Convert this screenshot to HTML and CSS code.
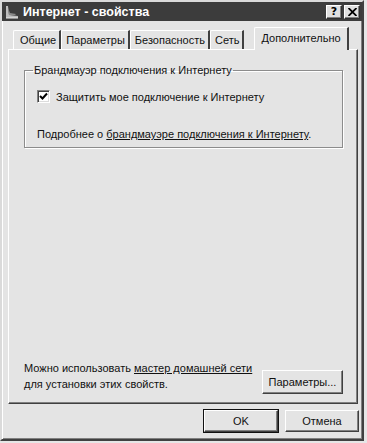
FILE: index.html
```html
<!DOCTYPE html>
<html lang="ru">
<head>
<meta charset="utf-8">
<title>Интернет - свойства</title>
<link rel="stylesheet" href="styles.css">
</head>
<body>
<div class="window">
  <div class="titlebar">
    <svg class="app-icon" width="16" height="16" viewBox="0 0 16 16">
      <path d="M2 2 L4 2 L5 11 L14 12 L14 14 L2 14 Z" fill="#bdbdbd"/>
      <path d="M4 4 L6 9 L12 10 L11 11 L5 11 Z" fill="#8a8a8a"/>
      <path d="M2 14 L14 14" stroke="#e8e8e8" stroke-width="1"/>
    </svg>
    <span class="title">Интернет - свойства</span>
    <div class="title-buttons">
      <span class="tbtn">?</span>
      <span class="tbtn close">
        <svg width="9" height="8" viewBox="0 0 9 8"><path d="M0.5 0 L8.5 8 M8.5 0 L0.5 8" stroke="#000" stroke-width="1.8" fill="none"/></svg>
      </span>
    </div>
  </div>

  <div class="tabs">
    <span class="tab first">Общие</span>
    <span class="tab">Параметры</span>
    <span class="tab">Безопасность</span>
    <span class="tab">Сеть</span>
    <span class="tab active">Дополнительно</span>
  </div>

  <div class="panel">
    <fieldset class="group">
      <legend>Брандмауэр подключения к Интернету</legend>
      <div class="check-row">
        <span class="checkbox">
          <svg width="9" height="9" viewBox="0 0 9 9"><path d="M1 4 L3.5 6.5 L8 1.5" stroke="#000" stroke-width="2" fill="none"/></svg>
        </span>
        <span>Защитить мое подключение к Интернету</span>
      </div>
      <div class="more">Подробнее о <a class="link">брандмауэре подключения к Интернету</a>.</div>
    </fieldset>

    <div class="bottom">
      <div class="hint">Можно использовать <a class="link">мастер домашней сети</a><br>для установки этих свойств.</div>
      <span class="btn params">Параметры...</span>
    </div>
  </div>

  <div class="actions">
    <span class="btn default">OK</span>
    <span class="btn">Отмена</span>
  </div>
</div>
</body>
</html>
```

FILE: styles.css
```css
html, body {
  margin: 0;
  padding: 0;
  background: #e6e6e6;
}
body {
  width: 367px;
  height: 443px;
  font-family: "Liberation Sans", Arial, sans-serif;
  font-size: 11px;
  color: #111;
}
.window {
  box-sizing: border-box;
  width: 364px;
  height: 441px;
  background: #e4e4e4;
  border: 2px solid;
  border-color: #dadada #404040 #404040 #dadada;
  box-shadow: inset 1px 1px #ffffff, inset -1px -1px #808080;
  display: flex;
  flex-direction: column;
}
.titlebar {
  height: 19px;
  background: #3c3c3c;
  display: flex;
  align-items: center;
  padding-left: 2px;
}
.app-icon {
  flex: none;
}
.title {
  margin-left: 3px;
  color: #fff;
  font-family: "Liberation Sans", Arial, sans-serif;
  font-weight: bold;
  font-size: 12.5px;
  flex: 1;
}
.title-buttons {
  display: flex;
  gap: 2px;
  margin-right: 2px;
}
.tbtn {
  box-sizing: border-box;
  width: 16px;
  height: 14px;
  background: #e0e0e0;
  border: 1px solid;
  border-color: #fff #303030 #303030 #fff;
  box-shadow: inset -1px -1px #808080;
  font-family: "DejaVu Sans", sans-serif;
  font-weight: bold;
  font-size: 11px;
  line-height: 12px;
  text-align: center;
  color: #000;
  display: flex;
  align-items: center;
  justify-content: center;
}
.tabs {
  margin-top: 6px;
  padding-left: 11px;
  height: 22px;
  display: flex;
  align-items: flex-end;
  font-size: 11px;
}
.tab {
  box-sizing: border-box;
  height: 19px;
  padding: 0 3px 0 4px;
  line-height: 19px;
  border-left: 1px solid #fff;
  border-top: 1px solid #fff;
  border-right: 2px solid #404040;
  border-top-left-radius: 2px;
}
.tab.first {
  padding-left: 6px;
}
.tab.active {
  position: relative;
  z-index: 1;
  height: 23px;
  margin-bottom: -1px;
  margin-left: 10px;
  padding: 0 6px 0 6px;
  line-height: 20px;
  background: #e4e4e4;
}
.panel {
  box-sizing: border-box;
  margin-left: 6px;
  width: 350px;
  height: 355px;
  border: 1px solid;
  border-color: #fff #404040 #404040 #fff;
  box-shadow: inset -1px -1px #808080;
  padding: 0 14px 0 15px;
  display: flex;
  flex-direction: column;
  justify-content: space-between;
}
.group {
  margin: 14px 0 0 0;
  padding: 0 12px 0 12px;
  height: 84px;
  box-sizing: border-box;
  border: 1px solid #8c8c8c;
  box-shadow: 1px 1px #fff, inset 1px 1px #fff;
}
.group legend {
  padding: 0 1px;
  margin-left: -4px;
  line-height: 13px;
}
.check-row {
  display: flex;
  align-items: center;
  gap: 6px;
  margin-top: 13px;
}
.checkbox {
  box-sizing: border-box;
  width: 13px;
  height: 13px;
  background: #fff;
  border: 1px solid;
  border-color: #808080 #fff #fff #808080;
  box-shadow: inset 1px 1px #404040, inset -1px -1px #dcdcdc;
  display: flex;
  align-items: center;
  justify-content: center;
}
.more {
  margin-top: 25px;
}
.link {
  text-decoration: underline;
  color: #111;
}
.bottom {
  display: flex;
  align-items: flex-end;
  justify-content: space-between;
  margin-bottom: 9px;
  line-height: 16px;
}
.hint {
  padding-bottom: 2px;
}
.btn {
  box-sizing: border-box;
  height: 23px;
  background: #e4e4e4;
  border: 1px solid;
  border-color: #fff #404040 #404040 #fff;
  box-shadow: inset -1px -1px #808080;
  display: flex;
  align-items: center;
  justify-content: center;
}
.btn.params {
  width: 81px;
  height: 24px;
}
.actions {
  display: flex;
  justify-content: flex-end;
  gap: 7px;
  margin-top: 6px;
  padding-right: 3px;
}
.actions .btn {
  width: 74px;
  height: 22px;
}
.btn.default {
  outline: 1px solid #111;
}
```
